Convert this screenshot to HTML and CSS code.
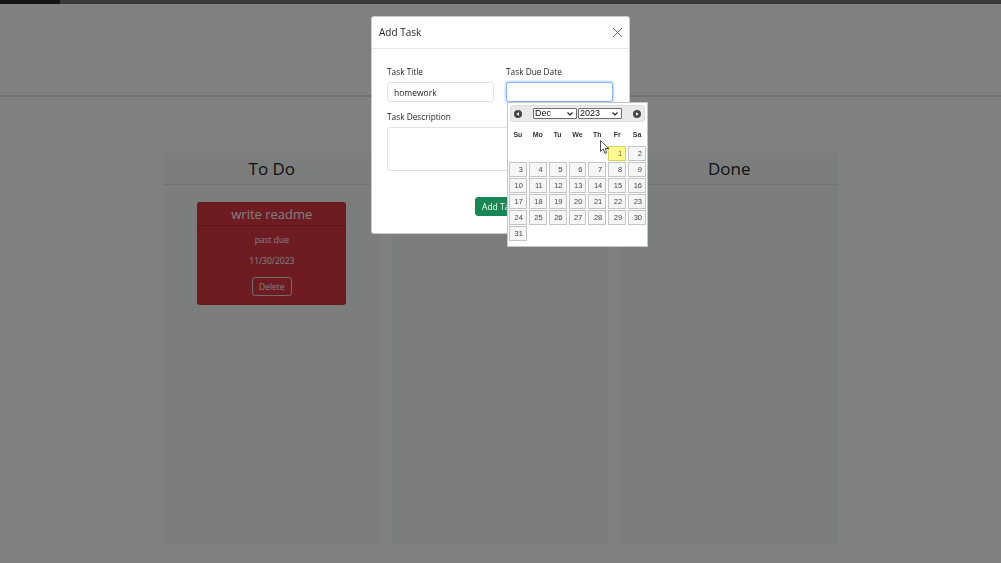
FILE: index.html
```html
<!DOCTYPE html>
<html lang="en">
<head>
<meta charset="utf-8">
<title>Task Board</title>
<link rel="stylesheet" href="styles.css">
</head>
<body>
<div class="chrome"><span class="chrome-a"></span><span class="chrome-b"></span></div>
<header class="page-header"></header>
<main class="board">
  <section class="lane">
    <h2 class="lane-title">To Do</h2>
    <div class="lane-body">
      <article class="task">
        <h3 class="task-title">write readme</h3>
        <div class="task-body">
          <p>past due</p>
          <p>11/30/2023</p>
          <button class="btn-delete" type="button">Delete</button>
        </div>
      </article>
    </div>
  </section>
  <section class="lane">
    <h2 class="lane-title">In Progress</h2>
    <div class="lane-body"></div>
  </section>
  <section class="lane">
    <h2 class="lane-title">Done</h2>
    <div class="lane-body"></div>
  </section>
</main>

<div class="backdrop"></div>

<div class="modal">
  <div class="modal-header">
    <h5 class="modal-title">Add Task</h5>
    <svg class="close" width="11" height="11" viewBox="0 0 11 11"><path d="M1 1L10 10M10 1L1 10" stroke="#6c6c6c" stroke-width="1" fill="none"/></svg>
  </div>
  <div class="modal-body">
    <div class="form-row">
      <div class="field">
        <label class="lbl">Task Title</label>
        <input class="ctrl" type="text" value="homework">
      </div>
      <div class="field">
        <label class="lbl">Task Due Date</label>
        <input class="ctrl focus" type="text" value="">
      </div>
    </div>
    <div class="field field-desc">
      <label class="lbl">Task Description</label>
      <textarea class="ctrl area"></textarea>
    </div>
    <div class="actions">
      <button class="btn-add" type="button">Add Task</button>
    </div>
  </div>
</div>

<div class="datepicker">
  <div class="dp-header">
    <span class="dp-nav"><svg width="8" height="8" viewBox="0 0 8 8"><circle cx="4" cy="4" r="4" fill="#454545"/><path d="M2.3 4L5 2.3V5.7Z" fill="#fff"/></svg></span>
    <span class="dp-selects">
      <span class="dp-select dp-month">Dec<svg width="6" height="4" viewBox="0 0 6 4"><path d="M0.5 0.5L3 3L5.5 0.5" stroke="#222" stroke-width="1.2" fill="none"/></svg></span>
      <span class="dp-select dp-year">2023<svg width="6" height="4" viewBox="0 0 6 4"><path d="M0.5 0.5L3 3L5.5 0.5" stroke="#222" stroke-width="1.2" fill="none"/></svg></span>
    </span>
    <span class="dp-nav"><svg width="8" height="8" viewBox="0 0 8 8"><circle cx="4" cy="4" r="4" fill="#454545"/><path d="M5.7 4L3 2.3V5.7Z" fill="#fff"/></svg></span>
  </div>
  <table class="dp-table">
    <thead>
      <tr><th>Su</th><th>Mo</th><th>Tu</th><th>We</th><th>Th</th><th>Fr</th><th>Sa</th></tr>
    </thead>
    <tbody>
      <tr><td></td><td></td><td></td><td></td><td></td><td><a class="today">1</a></td><td><a>2</a></td></tr>
      <tr><td><a>3</a></td><td><a>4</a></td><td><a>5</a></td><td><a>6</a></td><td><a>7</a></td><td><a>8</a></td><td><a>9</a></td></tr>
      <tr><td><a>10</a></td><td><a>11</a></td><td><a>12</a></td><td><a>13</a></td><td><a>14</a></td><td><a>15</a></td><td><a>16</a></td></tr>
      <tr><td><a>17</a></td><td><a>18</a></td><td><a>19</a></td><td><a>20</a></td><td><a>21</a></td><td><a>22</a></td><td><a>23</a></td></tr>
      <tr><td><a>24</a></td><td><a>25</a></td><td><a>26</a></td><td><a>27</a></td><td><a>28</a></td><td><a>29</a></td><td><a>30</a></td></tr>
      <tr><td><a>31</a></td><td></td><td></td><td></td><td></td><td></td><td></td></tr>
    </tbody>
  </table>
</div>

<svg class="cursor" width="10" height="15" viewBox="0 0 10 15"><path d="M0.5 0.5V11.5L3.2 9L5 13.5L6.8 12.7L5 8.5H8.8Z" fill="#fff" stroke="#222" stroke-width="0.8" stroke-linejoin="round"/></svg>
</body>
</html>
```
FILE: styles.css
```css
* { box-sizing: border-box; margin: 0; padding: 0; }
html, body { height: 100%; }
body {
  font-family: "Open Sans", "Liberation Sans", sans-serif;
  background: #ffffff;
  color: #212529;
  overflow: hidden;
}

.chrome { display: flex; height: 4px; position: relative; z-index: 50; }
.chrome-a { width: 60px; background: #141414; }
.chrome-b { flex: 1; background: #393939; }

.page-header { height: 93px; border-bottom: 2px solid #dde1e4; }

.board {
  width: 674px;
  margin: 56px auto 0;
  display: grid;
  grid-template-columns: repeat(3, 1fr);
  gap: 12px;
}
.lane { background: #f8f9fa; height: 392px; display: flex; flex-direction: column; }
.lane-title {
  font-size: 17px; font-weight: 400; text-align: center;
  line-height: 24px; padding: 4px 0 3px;
  border-bottom: 1px solid #e2e4e7;
  color: #212529;
}
.lane-body { padding-top: 17px; }

.task {
  width: 149px; margin: 0 auto;
  background: #dc3545; color: #fff;
  border-radius: 3px; border: 1px solid rgba(0,0,0,.08);
}
.task-title {
  font-size: 13px; font-weight: 400; text-align: center;
  line-height: 17px; padding: 3px 0 2px;
  border-bottom: 1px solid rgba(0,0,0,.18);
}
.task-body { padding: 8px; text-align: center; font-size: 8.5px; line-height: 12px; }
.task-body p { margin-bottom: 9px; }
.btn-delete {
  font-family: inherit; font-size: 8.5px; line-height: 11px; color: #fff;
  background: transparent; border: 1px solid #e9d5d7; border-radius: 3px;
  padding: 3px 6px; margin-top: 1px;
}

.backdrop { position: fixed; inset: 0; background: rgba(0,1,0,.5); z-index: 10; }

.modal {
  position: fixed; top: 16px; left: 0; right: 0; margin: 0 auto;
  width: 259px; z-index: 20;
  background: #fff; border: 1px solid rgba(0,0,0,.2); border-radius: 3px;
}
.modal-header {
  display: flex; align-items: center; justify-content: space-between;
  padding: 8px 6px 8px 7px; border-bottom: 1px solid #e3e6e9;
}
.modal-title { font-size: 10px; line-height: 15px; font-weight: 400; }
.close { display: block; }

.modal-body { padding: 17px 16px 17px 15px; }
.form-row { display: grid; grid-template-columns: 1fr 1fr; gap: 12px; }
.lbl { display: block; font-size: 8.3px; line-height: 12px; margin-bottom: 4px; color: #212529; }
.ctrl {
  display: block; width: 100%; height: 20px;
  font-family: inherit; font-size: 8.5px; color: #212529;
  border: 1px solid #dee2e6; border-radius: 3px; padding: 0 6px;
  background: #fff; outline: none;
}
.ctrl.focus { border-color: #86b7fe; box-shadow: 0 0 0 1.5px rgba(13,110,253,.2); }
.field-desc { margin-top: 9px; }
.area { height: 44px; resize: none; }
.actions { margin-top: 26px; display: flex; justify-content: center; }
.btn-add {
  font-family: inherit; font-size: 8.5px; line-height: 11px; color: #fff;
  background: #198754; border: 1px solid #198754; border-radius: 3px;
  padding: 3px 6px; height: 19px;
}

.datepicker {
  position: fixed; left: 507px; top: 102px; width: 141px; z-index: 30;
  background: #fff; border: 1px solid #c5c5c5; padding: 2px 0 3px;
  font-family: "Liberation Sans", Arial, sans-serif; color: #333;
}
.dp-header {
  margin: 0 2px; height: 17px;
  display: flex; align-items: center;
  background: #e9e9e9; border: 1px solid #dddddd; border-radius: 3px;
}
.dp-nav { width: 14px; display: flex; justify-content: center; align-items: center; }
.dp-nav svg { display: block; }
.dp-selects { flex: 1; display: flex; justify-content: center; gap: 1px; }
.dp-select {
  width: 44px; height: 11px; background: #fff;
  border: 1px solid #6e6e6e; border-radius: 1px;
  display: flex; align-items: center; justify-content: space-between;
  font-size: 9px; line-height: 9px; padding: 0 3px 0 1px; color: #111;
}
.dp-select svg { display: block; }

.dp-table { width: 100%; border-collapse: collapse; table-layout: fixed; margin-bottom: 1px; }
.dp-table th {
  height: 24px; font-size: 7px; font-weight: 700; text-align: center; color: #333;
  padding: 0;
}
.dp-table td { padding: 0 1px 1px; height: 16px; }
.dp-table a {
  display: block; height: 15px; line-height: 13px;
  border: 1px solid #c5c5c5; background: #f6f6f6; color: #454545;
  text-align: right; padding-right: 3px; font-size: 7.5px;
}
.dp-table a.today { background: #fffa90; border-color: #dad55e; color: #777620; }

.cursor { position: fixed; left: 600px; top: 140px; z-index: 40; }
```
